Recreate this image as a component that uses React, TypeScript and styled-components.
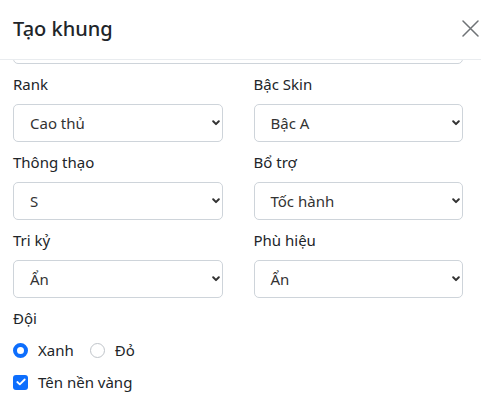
import React from 'react'
import styled, { createGlobalStyle } from 'styled-components'

const GlobalStyle = createGlobalStyle`
  html, body {
    margin: 0;
    padding: 0;
    background: #fff;
  }
  body {
    font-family: "Noto Sans", "Open Sans", sans-serif;
    color: #212529;
    font-size: 16px;
  }
  * { box-sizing: border-box; }
`

const fields = [
  { label: 'Rank', value: 'Cao thủ' },
  { label: 'Bậc Skin', value: 'Bậc A' },
  { label: 'Thông thạo', value: 'S' },
  { label: 'Bổ trợ', value: 'Tốc hành' },
  { label: 'Tri kỷ', value: 'Ẩn' },
  { label: 'Phù hiệu', value: 'Ẩn' },
]

const Chevron = () => (
  <svg width="8" height="6" viewBox="0 0 8 6">
    <path d="M1.2 1.3 L4 4.1 L6.8 1.3" fill="none" stroke="#333" strokeWidth="2" strokeLinecap="round" strokeLinejoin="round" />
  </svg>
)

const Select = ({ value }: { value: string }) => (
  <SelectBox>
    <span>{value}</span>
    <Chevron />
  </SelectBox>
)

const App = () => {
  return (
    <Modal>
      <GlobalStyle />
      <Header>
        <h5>Tạo khung</h5>
        <CloseButton aria-label="close">
          <svg width="17" height="17" viewBox="0 0 17 17">
            <path d="M1 1 L16 16 M16 1 L1 16" stroke="#6f7376" strokeWidth="1.5" strokeLinecap="round" />
          </svg>
        </CloseButton>
      </Header>
      <Body>
        <HiddenInput />
        <Grid>
          {fields.map((f) => (
            <Field key={f.label}>
              <Label>{f.label}</Label>
              <Select value={f.value} />
            </Field>
          ))}
        </Grid>
        <Label>Đội</Label>
        <CheckRow>
          <Check>
            <Radio checked />
            <span>Xanh</span>
          </Check>
          <Check>
            <Radio />
            <span>Đỏ</span>
          </Check>
        </CheckRow>
        <CheckRow>
          <Check>
            <Box>
              <svg width="10" height="8" viewBox="0 0 10 8">
                <path d="M1.3 4 L3.8 6.4 L8.7 1.5" fill="none" stroke="#fff" strokeWidth="1.8" strokeLinecap="round" strokeLinejoin="round" />
              </svg>
            </Box>
            <span>Tên nền vàng</span>
          </Check>
        </CheckRow>
      </Body>
    </Modal>
  )
}

const Modal = styled.div`
  width: 481px;
  height: 400px;
  overflow: hidden;
  background: #fff;
`

const Header = styled.div`
  height: 60px;
  display: flex;
  align-items: center;
  justify-content: space-between;
  padding: 0 2px 1px 13px;
  border-bottom: 1px solid #e9ecef;
  position: relative;
  z-index: 1;
  background: #fff;
  h5 {
    margin: 0;
    font-size: 20px;
    font-weight: 500;
    line-height: 30px;
  }
`

const CloseButton = styled.button`
  border: 0;
  background: transparent;
  padding: 0;
  width: 17px;
  height: 17px;
  display: flex;
  margin-top: -2px;
`

const Body = styled.div`
  padding: 0 18px 0 13px;
`

const HiddenInput = styled.div`
  height: 38px;
  margin-top: -34px;
  margin-bottom: 8px;
  border: 1px solid #ced4da;
  border-radius: 5px;
`

const Grid = styled.div`
  display: grid;
  grid-template-columns: 1fr 1fr;
  column-gap: 31px;
`

const Field = styled.div`
  display: flex;
  flex-direction: column;
`

const Label = styled.div`
  line-height: 24px;
  margin-bottom: 8px;
  font-size: 15px;
`

const SelectBox = styled.div`
  height: 38px;
  margin-bottom: 8px;
  border: 1px solid #ced4da;
  border-radius: 5px;
  display: flex;
  align-items: center;
  justify-content: space-between;
  padding: 0 2px 0 16px;
  font-size: 15px;
  color: #333;
`

const CheckRow = styled.div`
  display: flex;
  gap: 16px;
  height: 24px;
  margin-bottom: 8px;
`

const Check = styled.label`
  display: flex;
  align-items: center;
  gap: 10px;
  font-size: 15px;
  line-height: 24px;
`

const Radio = styled.span<{ checked?: boolean }>`
  width: 15px;
  height: 15px;
  border-radius: 50%;
  border: ${(p) => (p.checked ? '4px solid #0d6efd' : '1px solid #bfc4c9')};
  background: #fff;
`

const Box = styled.span`
  width: 15px;
  height: 15px;
  border-radius: 3px;
  background: #0d6efd;
  display: flex;
  align-items: center;
  justify-content: center;
`

export default App
